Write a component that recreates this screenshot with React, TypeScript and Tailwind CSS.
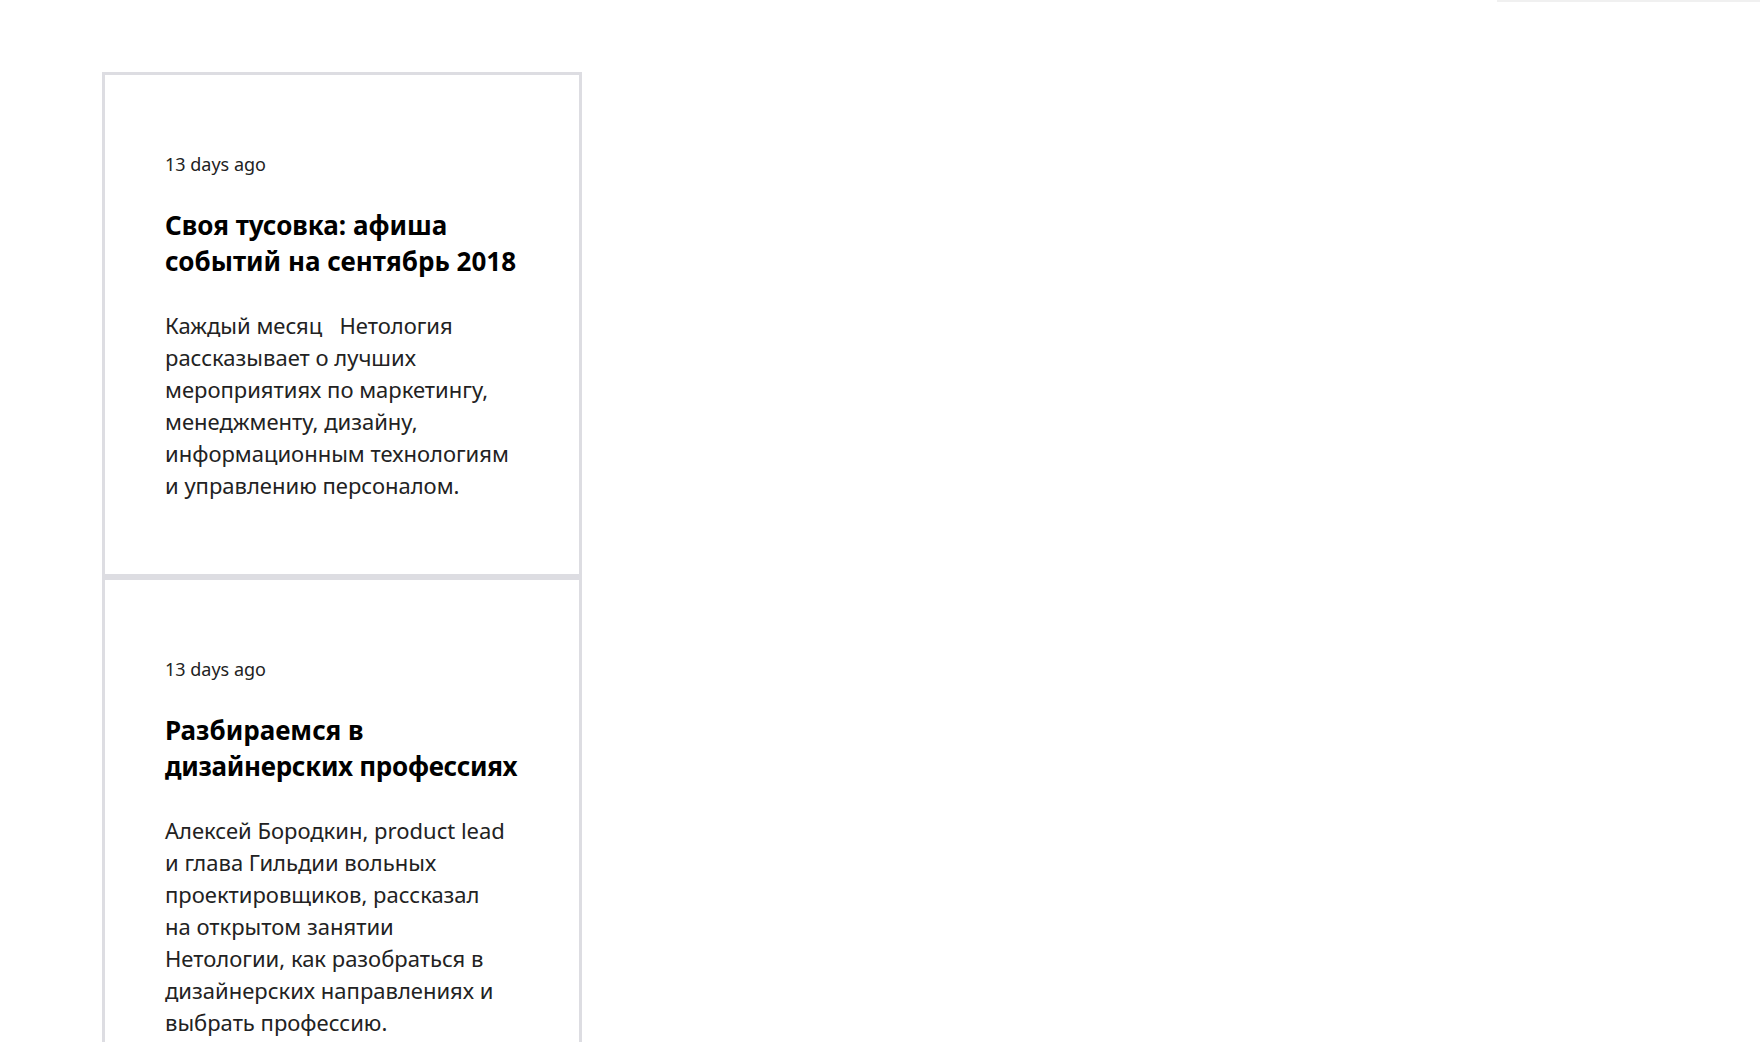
export default function App() {
  const cards = [
    {
      title: ["Своя тусовка: афиша", "событий на сентябрь 2018"],
      tight: false,
      body: [
        "Каждый месяц\u00a0\u00a0 Нетология",
        "рассказывает о лучших",
        "мероприятиях по маркетингу,",
        "менеджменту, дизайну,",
        "информационным технологиям",
        "и управлению персоналом.",
      ],
    },
    {
      title: ["Разбираемся в", "дизайнерских профессиях"],
      tight: true,
      body: [
        "Алексей Бородкин, product lead",
        "и глава Гильдии вольных",
        "проектировщиков, рассказал",
        "на открытом занятии",
        "Нетологии, как разобраться в",
        "дизайнерских направлениях и",
        "выбрать профессию.",
      ],
    },
  ];
  return (
    <div className="min-h-[1042px] bg-white" style={{ fontFamily: '"Noto Sans", "Open Sans", sans-serif' }}>
      <div className="flex justify-end">
        <div className="w-[263px] h-[2px] bg-[#f0f0f0]" />
      </div>
      <div className="pt-[70px] pl-[102px] flex flex-col">
        {cards.map((c, i) => (
          <div key={i} className="w-[480px] border-[3px] border-[#dddde2] bg-white px-[60px] pt-[76px] pb-[73px]">
            <div className="text-[18px] leading-[27px] text-[#222]">13 days ago</div>
            <h2 className="mt-[29px] text-[26px] leading-[36px] font-bold text-black">
              {c.title.map((t, j) => (
                <span key={j} className={c.tight && j === 1 ? "block whitespace-nowrap tracking-[-0.3px]" : "block whitespace-nowrap"}>
                  {t}
                </span>
              ))}
            </h2>
            <p className="mt-[30px] text-[22px] leading-[32px] text-[#222]">
              {c.body.map((t, j) => (
                <span key={j} className="block whitespace-nowrap">
                  {t}
                </span>
              ))}
            </p>
          </div>
        ))}
      </div>
    </div>
  );
}
